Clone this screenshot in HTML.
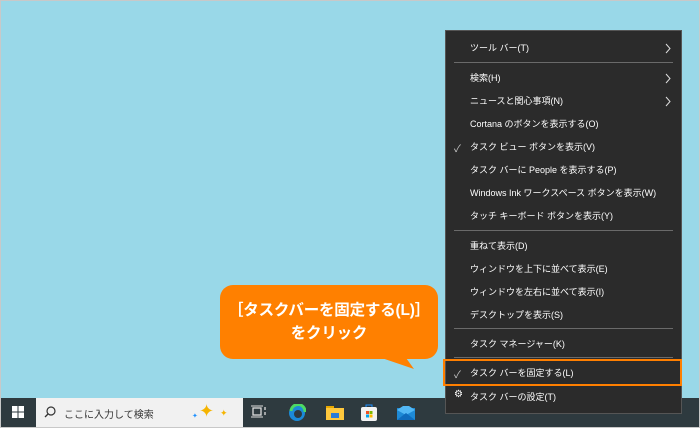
<!DOCTYPE html><html><head><meta charset="utf-8"><style>
*{margin:0;padding:0;box-sizing:border-box}
body{width:700px;height:428px;overflow:hidden;background:#c8c8c8;font-family:"Liberation Sans","Noto Sans CJK JP",sans-serif}
#f{position:absolute;left:1px;top:1px;width:698px;height:426px;background:#99d8e8;overflow:hidden}
#tb{position:absolute;left:0;top:397px;width:698px;height:29px;background:#2e3a3f}
#sr{position:absolute;left:35px;top:397px;width:207px;height:29px;background:#f1f1f1;font-size:10px;color:#333}
#m{position:absolute;left:444px;top:29px;width:237px;height:384px;background:#2b2b2b;border:1px solid #555}
.i{position:absolute;left:24px;font-size:9px;color:#fff;line-height:12px;white-space:nowrap}
.s{position:absolute;left:8px;right:8px;height:1px;background:#6a6a6a}
.c{position:absolute;right:10px}
.k{position:absolute;left:8px;color:#ccc;font-size:10px}
#ob{position:absolute;left:442px;top:358px;width:239px;height:27px;border:2px solid #ff7f00}
#cl{position:absolute;left:219px;top:284px;width:218px;height:74px;background:#ff8000;border-radius:13px;color:#fff;font-weight:bold;font-size:15.5px;text-align:center;line-height:23px;padding-top:14px;letter-spacing:-0.2px}
</style></head><body><div id="f">
<svg style="position:absolute;left:0;top:0" width="698" height="426"><polygon points="360,350 400,350 413,368" fill="#ff8000"/></svg>
<div id="cl">［タスクバーを固定する(L)］<br>をクリック</div>
<div id="tb"></div>
<svg style="position:absolute;left:11px;top:405px" width="12" height="12"><rect x="0" y="0" width="5.5" height="5.5" fill="#fff"/><rect x="6.5" y="0" width="5.5" height="5.5" fill="#fff"/><rect x="0" y="6.5" width="5.5" height="5.5" fill="#fff"/><rect x="6.5" y="6.5" width="5.5" height="5.5" fill="#fff"/></svg>
<div id="sr"><svg style="position:absolute;left:8px;top:8px" width="12" height="12"><circle cx="7" cy="5" r="4" fill="none" stroke="#333" stroke-width="1.2"/><line x1="4" y1="8" x2="1" y2="11" stroke="#333" stroke-width="1.3"/></svg><span style="position:absolute;left:28px;top:8px">ここに入力して検索</span><span style="position:absolute;left:163px;top:3px;color:#f5b400;font-size:18px">✦</span><span style="position:absolute;left:184px;top:10px;color:#f5b400;font-size:9px">✦</span><span style="position:absolute;left:156px;top:14px;color:#1e90ff;font-size:7px">✦</span></div>
<svg style="position:absolute;left:250px;top:404px" width="18" height="14"><rect x="2" y="3" width="8" height="7" fill="none" stroke="#ddd" stroke-width="1.3"/><line x1="0" y1="1" x2="12" y2="1" stroke="#ddd"/><line x1="0" y1="12" x2="12" y2="12" stroke="#ddd"/><line x1="14" y1="2" x2="14" y2="12" stroke="#ddd" stroke-width="1.3" stroke-dasharray="3 2"/></svg>
<svg style="position:absolute;left:287px;top:403px" width="18" height="18"><circle cx="9" cy="9" r="8" fill="#1b8ad8"/><circle cx="10" cy="10" r="4" fill="#2e3a3f"/><path d="M3 7 A7 7 0 0 1 17 8" stroke="#4cd964" stroke-width="3" fill="none"/></svg>
<svg style="position:absolute;left:325px;top:405px" width="18" height="14"><rect x="0" y="0" width="8" height="4" fill="#e8a800"/><rect x="0" y="2" width="18" height="12" fill="#ffc83d"/><rect x="5" y="7" width="8" height="5" fill="#2b7bd6"/></svg>
<svg style="position:absolute;left:360px;top:403px" width="16" height="17"><rect x="0" y="3" width="16" height="14" rx="2" fill="#f2f2f2"/><path d="M5 3 V1 H11 V3" stroke="#1e90ff" fill="none"/><rect x="5" y="7" width="3" height="3" fill="#f25022"/><rect x="8.5" y="7" width="3" height="3" fill="#7fba00"/><rect x="5" y="10.5" width="3" height="3" fill="#00a4ef"/><rect x="8.5" y="10.5" width="3" height="3" fill="#ffb900"/></svg>
<svg style="position:absolute;left:396px;top:405px" width="18" height="14"><rect x="0" y="2" width="18" height="12" fill="#1e8ad6"/><path d="M0 4 L9 -2 L18 4 L9 9 Z" fill="#52b8f5"/><path d="M0 14 L9 7 L18 14" fill="#0f6cbd"/></svg>
<div id="m">
<div class="i" style="top:11px">ツール バー(T)</div><svg class="c" style="top:12px" width="6" height="11"><path d="M1 1 L5 5.5 L1 10" stroke="#ddd" fill="none"/></svg>
<div class="s" style="top:31px"></div>
<div class="i" style="top:41px">検索(H)</div><svg class="c" style="top:42px" width="6" height="11"><path d="M1 1 L5 5.5 L1 10" stroke="#ddd" fill="none"/></svg>
<div class="i" style="top:64px">ニュースと関心事項(N)</div><svg class="c" style="top:65px" width="6" height="11"><path d="M1 1 L5 5.5 L1 10" stroke="#ddd" fill="none"/></svg>
<div class="i" style="top:87px">Cortana のボタンを表示する(O)</div>
<div class="k" style="top:109px">✓</div><div class="i" style="top:110px">タスク ビュー ボタンを表示(V)</div>
<div class="i" style="top:133px">タスク バーに People を表示する(P)</div>
<div class="i" style="top:156px">Windows Ink ワークスペース ボタンを表示(W)</div>
<div class="i" style="top:179px">タッチ キーボード ボタンを表示(Y)</div>
<div class="s" style="top:199px"></div>
<div class="i" style="top:209px">重ねて表示(D)</div>
<div class="i" style="top:232px">ウィンドウを上下に並べて表示(E)</div>
<div class="i" style="top:255px">ウィンドウを左右に並べて表示(I)</div>
<div class="i" style="top:278px">デスクトップを表示(S)</div>
<div class="s" style="top:297px"></div>
<div class="i" style="top:307px">タスク マネージャー(K)</div>
<div class="s" style="top:326px"></div>
<div class="k" style="top:335px">✓</div><div class="i" style="top:336px">タスク バーを固定する(L)</div>
<div class="k" style="top:358px;color:#fff">⚙</div><div class="i" style="top:360px">タスク バーの設定(T)</div>
</div>
<div id="ob"></div>
</div></body></html>
